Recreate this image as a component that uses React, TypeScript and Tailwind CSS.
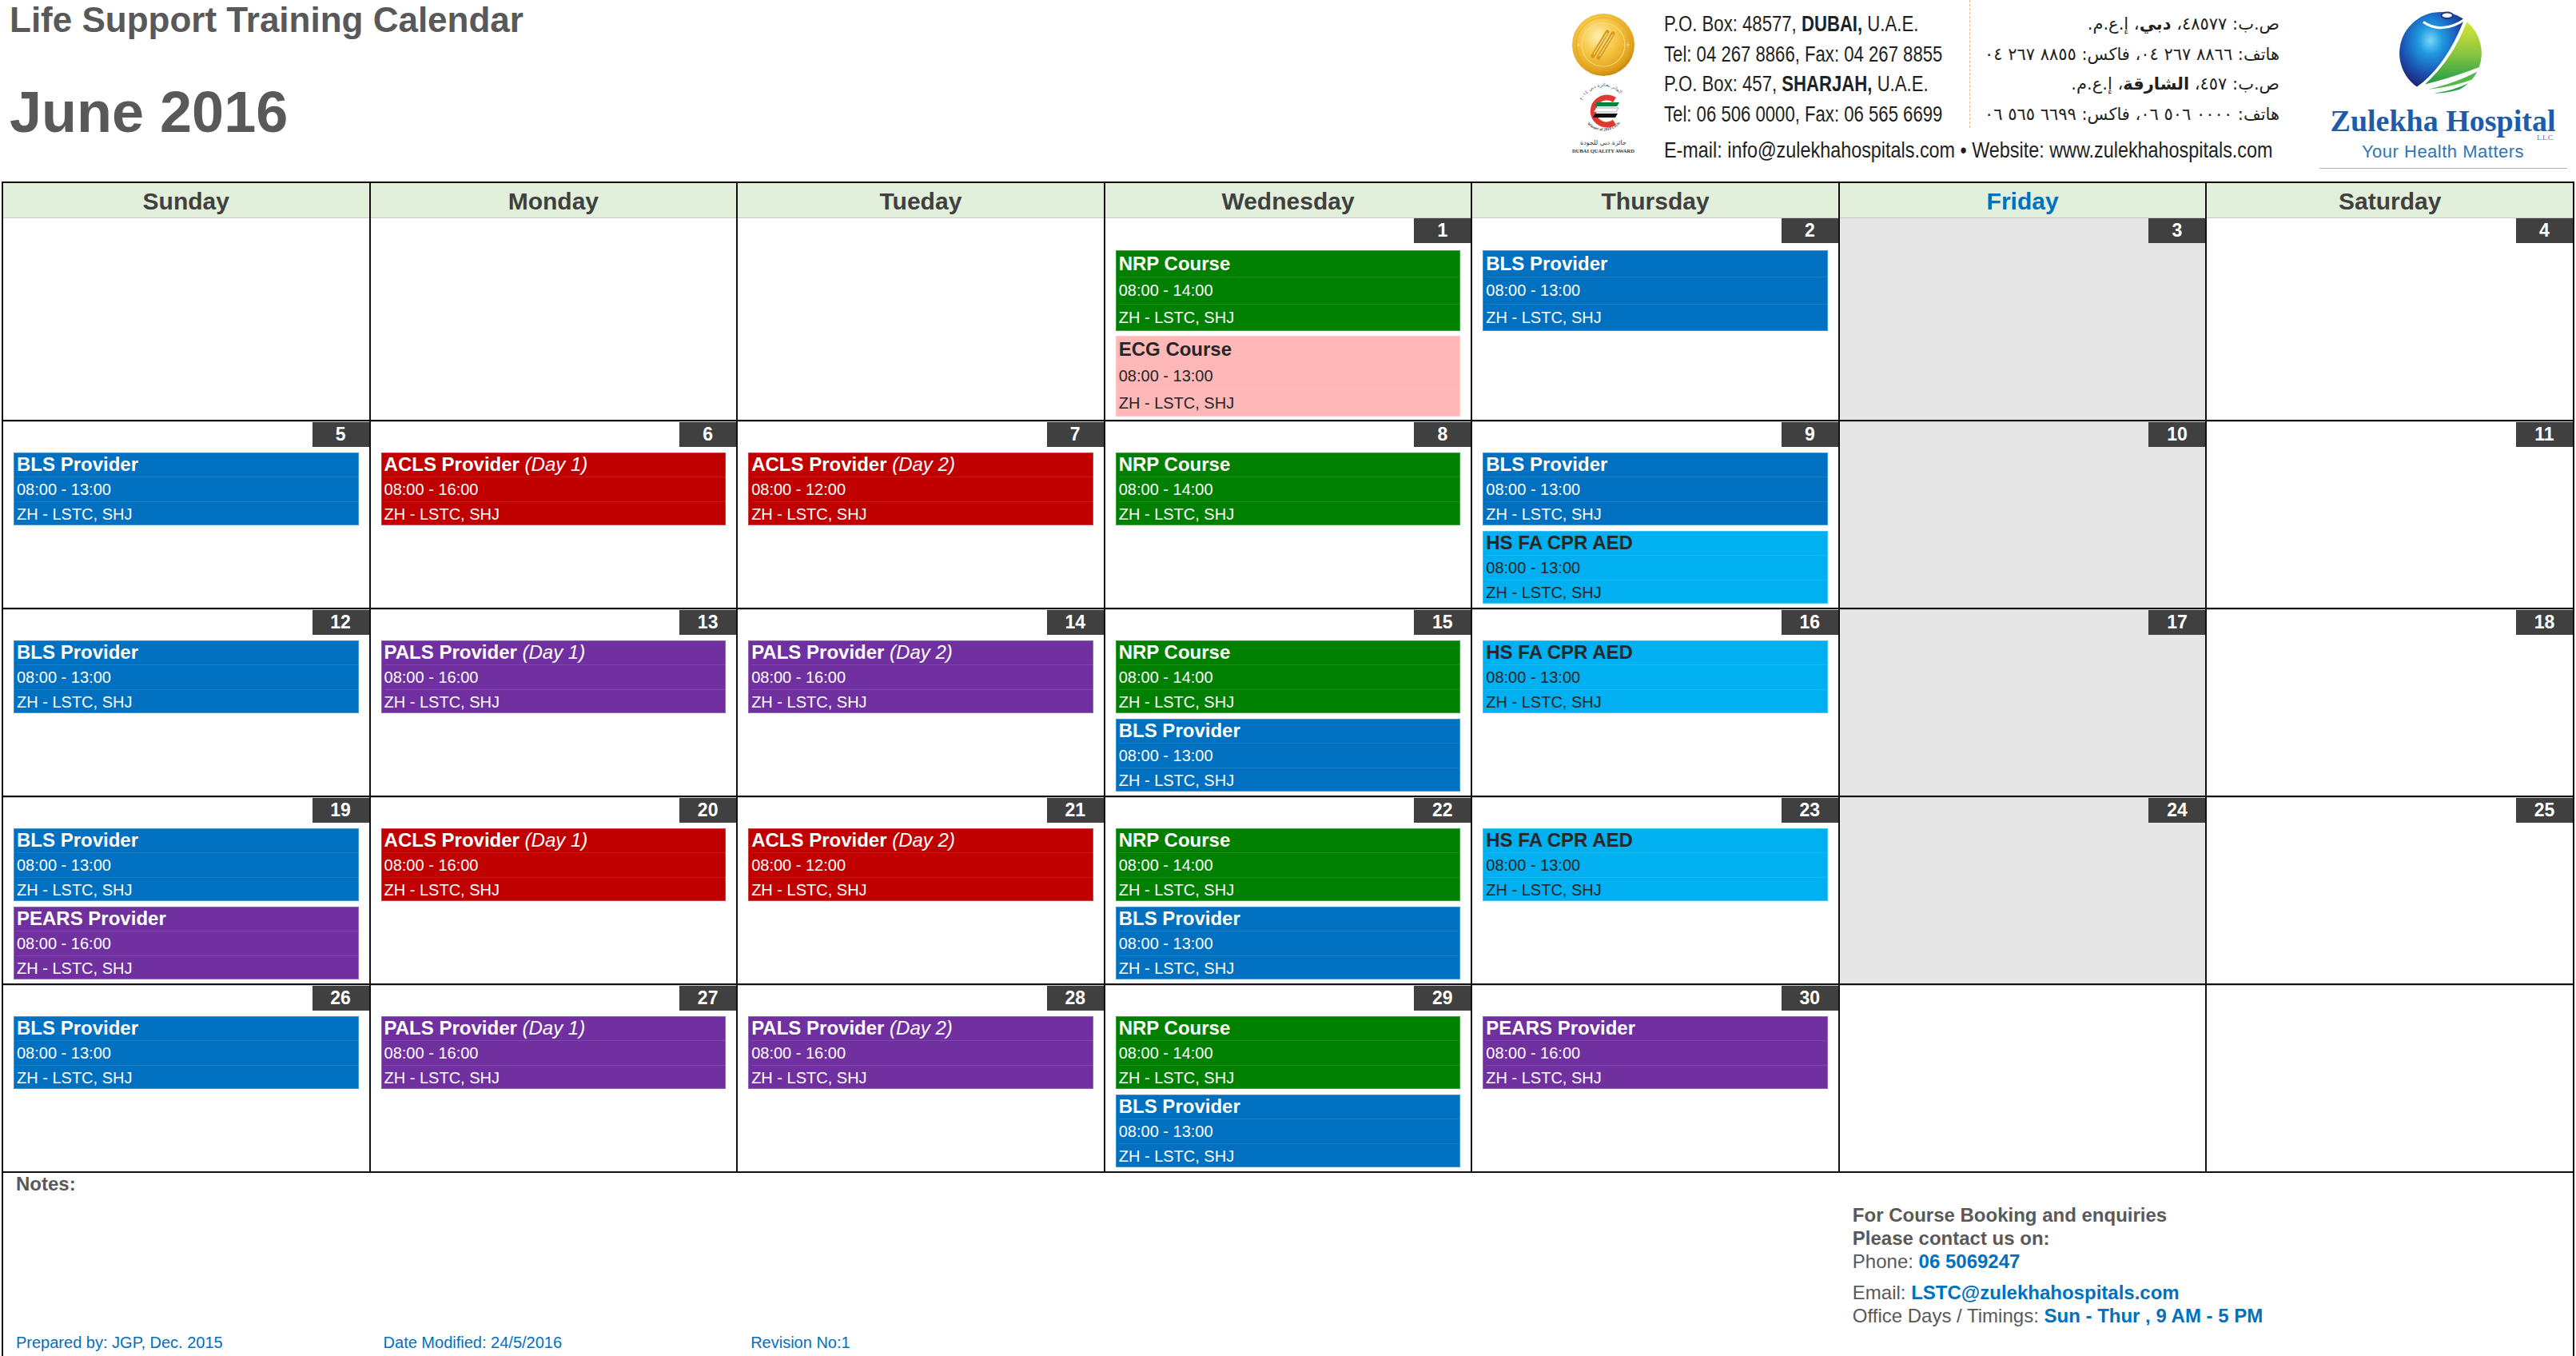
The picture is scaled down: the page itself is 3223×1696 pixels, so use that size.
import React from "react";

type Kind = "nrp" | "ecg" | "bls" | "acls" | "pals" | "pears" | "hs";
type Ev = { t: string; d?: string; time: string; k: Kind };
type Cell = { day?: number; ev: Ev[] };

const KCLS: Record<Kind, string> = {
  nrp: "bg-[#008000] text-white",
  ecg: "bg-[#ffb7b7] text-[#262626]",
  bls: "bg-[#0070c0] text-white",
  acls: "bg-[#c00000] text-white",
  pals: "bg-[#7030a0] text-white",
  pears: "bg-[#7030a0] text-white",
  hs: "bg-[#00b0f0] text-[#262626]",
};

const NRP: Ev = { t: "NRP Course", time: "08:00 - 14:00", k: "nrp" };
const ECG: Ev = { t: "ECG Course", time: "08:00 - 13:00", k: "ecg" };
const BLS: Ev = { t: "BLS Provider", time: "08:00 - 13:00", k: "bls" };
const ACLS1: Ev = { t: "ACLS Provider", d: "(Day 1)", time: "08:00 - 16:00", k: "acls" };
const ACLS2: Ev = { t: "ACLS Provider", d: "(Day 2)", time: "08:00 - 12:00", k: "acls" };
const PALS1: Ev = { t: "PALS Provider", d: "(Day 1)", time: "08:00 - 16:00", k: "pals" };
const PALS2: Ev = { t: "PALS Provider", d: "(Day 2)", time: "08:00 - 16:00", k: "pals" };
const PEARS: Ev = { t: "PEARS Provider", time: "08:00 - 16:00", k: "pears" };
const HS: Ev = { t: "HS FA CPR AED", time: "08:00 - 13:00", k: "hs" };

const WEEKS: Cell[][] = [
  [{ ev: [] }, { ev: [] }, { ev: [] }, { day: 1, ev: [NRP, ECG] }, { day: 2, ev: [BLS] }, { day: 3, ev: [] }, { day: 4, ev: [] }],
  [{ day: 5, ev: [BLS] }, { day: 6, ev: [ACLS1] }, { day: 7, ev: [ACLS2] }, { day: 8, ev: [NRP] }, { day: 9, ev: [BLS, HS] }, { day: 10, ev: [] }, { day: 11, ev: [] }],
  [{ day: 12, ev: [BLS] }, { day: 13, ev: [PALS1] }, { day: 14, ev: [PALS2] }, { day: 15, ev: [NRP, BLS] }, { day: 16, ev: [HS] }, { day: 17, ev: [] }, { day: 18, ev: [] }],
  [{ day: 19, ev: [BLS, PEARS] }, { day: 20, ev: [ACLS1] }, { day: 21, ev: [ACLS2] }, { day: 22, ev: [NRP, BLS] }, { day: 23, ev: [HS] }, { day: 24, ev: [] }, { day: 25, ev: [] }],
  [{ day: 26, ev: [BLS] }, { day: 27, ev: [PALS1] }, { day: 28, ev: [PALS2] }, { day: 29, ev: [NRP, BLS] }, { day: 30, ev: [PEARS] }, { ev: [] }, { ev: [] }],
];

const DAYS = ["Sunday", "Monday", "Tueday", "Wednesday", "Thursday", "Friday", "Saturday"];

function EventBox({ ev, big }: { ev: Ev; big: boolean }) {
  const lh = big ? "leading-[33px]" : "leading-[30px]";
  return (
    <div className={`${KCLS[ev.k]} ${big ? "h-[101px]" : "h-[91px]"} pl-[4px] ring-1 ring-inset ring-white/25 whitespace-nowrap overflow-hidden`}>
      <div className={`${lh} text-[24px] font-bold border-b border-white/10`}>
        {ev.t}
        {ev.d && <span className="font-normal italic"> {ev.d}</span>}
      </div>
      <div className={`${lh} text-[20px] border-b border-white/10`}>{ev.time}</div>
      <div className={`${lh} text-[20px]`}>ZH - LSTC, SHJ</div>
    </div>
  );
}

function DayCell({ cell, col, big }: { cell: Cell; col: number; big: boolean }) {
  const gray = col === 5 && cell.day !== undefined;
  return (
    <div className={`flex flex-col border-t border-[#c8c8c8] ${gray ? "bg-[#e7e6e6]" : "bg-white"}`}>
      <div className="flex h-[31px] justify-end">
        {cell.day !== undefined && (
          <div className="flex w-[71px] items-center justify-center bg-[#404040] text-[23px] font-bold leading-none text-white">
            {cell.day}
          </div>
        )}
      </div>
      <div className={`${big ? "mt-[9px] gap-[6px]" : "mt-[7px] gap-[7px]"} flex flex-col px-[13px]`}>
        {cell.ev.map((e, i) => (
          <EventBox key={i} ev={e} big={big} />
        ))}
      </div>
    </div>
  );
}

function Seal() {
  return (
    <svg width="80" height="80" viewBox="0 0 80 80">
      <defs>
        <radialGradient id="gold" cx="42%" cy="36%" r="66%">
          <stop offset="0" stopColor="#fff0b0" />
          <stop offset="0.45" stopColor="#f6c646" />
          <stop offset="0.85" stopColor="#e2a21d" />
          <stop offset="1" stopColor="#c58512" />
        </radialGradient>
      </defs>
      <circle cx="40" cy="40" r="39" fill="url(#gold)" />
      <circle cx="40" cy="40" r="27" fill="none" stroke="#fbe08a" strokeWidth="1.2" opacity="0.8" />
      <circle cx="40" cy="40" r="34" fill="none" stroke="#d99a1a" strokeWidth="0.8" opacity="0.6" />
      <path d="M27 54 L45 24 M34 56 L52 26" stroke="#d9981a" strokeWidth="5" strokeLinecap="round" />
      <path d="M28 52 L45 25 M35 54 L52 27" stroke="#fde7a0" strokeWidth="1.2" />
      <circle cx="9" cy="40" r="1.5" fill="#fbe08a" />
      <circle cx="71" cy="40" r="1.5" fill="#fbe08a" />
    </svg>
  );
}

function Award() {
  return (
    <div className="flex flex-col items-center">
      <svg width="84" height="74" viewBox="0 0 84 74">
        <defs>
          <path id="arcTop" d="M14 36 A 28 28 0 0 1 70 36" />
          <path id="arcBot" d="M16 46 A 28 28 0 0 0 68 46" />
        </defs>
        <text fontSize="6" fill="#555" fontFamily="DejaVu Sans">
          <textPath href="#arcTop" startOffset="12%">الفائز بجائزة دبي ٢٠١٤</textPath>
        </text>
        <path d="M56 25 A 17 17 0 1 0 56 53" fill="none" stroke="#e0392f" strokeWidth="7" />
        <path d="M34 28 L62 28 L59 33 L31 33 Z" fill="#00843d" />
        <path d="M33 35 L61 35 L58 40 L30 40 Z" fill="#ffffff" stroke="#888" strokeWidth="0.7" />
        <path d="M32 42 L60 42 L57 47 L29 47 Z" fill="#111" />
        <text fontSize="5" fill="#444" fontFamily="Liberation Serif" fontWeight="bold">
          <textPath href="#arcBot" startOffset="16%">Winner of 2014 Cycle</textPath>
        </text>
      </svg>
      <div className="font-['DejaVu_Sans',sans-serif] text-[8px] leading-[10px] text-[#333]" dir="rtl">جائزة دبي للجودة</div>
      <div className="font-['Liberation_Serif',serif] text-[6.5px] font-bold leading-[9px] text-[#333]">DUBAI QUALITY AWARD</div>
    </div>
  );
}

function Globe() {
  return (
    <svg width="113" height="113" viewBox="0 0 110 110">
      <defs>
        <radialGradient id="blueG" cx="48%" cy="38%" r="62%">
          <stop offset="0" stopColor="#7ad6f8" />
          <stop offset="0.3" stopColor="#1f9ae0" />
          <stop offset="0.7" stopColor="#1b55b5" />
          <stop offset="1" stopColor="#1d2a7c" />
        </radialGradient>
        <linearGradient id="greenG" x1="0" y1="0" x2="0" y2="1">
          <stop offset="0" stopColor="#d8e638" />
          <stop offset="0.5" stopColor="#8cc63f" />
          <stop offset="1" stopColor="#1f9a4a" />
        </linearGradient>
      </defs>
      <path d="M83.7 14 A 50 50 0 1 0 26.3 96 Q 62 70 83.7 14 Z" fill="url(#blueG)" />
      <path d="M87.1 16.7 A 50 50 0 0 1 102 72.1 Q 72 84 36 93 Q 70 62 87.1 16.7 Z" fill="url(#greenG)" />
      <path d="M99.5 77.7 A 50 50 0 0 1 93.3 87.1 Q 70 96 40 99 Q 72 92 99.5 77.7 Z" fill="#52b848" />
      <path d="M89.1 91.6 A 50 50 0 0 1 78.5 99.1 Q 62 104 46 104 Q 70 101 89.1 91.6 Z" fill="#2aa24a" />
      <path d="M34 17 Q 58 33 86 13" stroke="#ffffff" strokeWidth="3" fill="none" />
      <ellipse cx="63" cy="9" rx="7" ry="3.6" fill="#ffffff" stroke="#1b3a8a" strokeWidth="2" />
    </svg>
  );
}

export default function App() {
  return (
    <div className="h-[1696px] w-[3223px] overflow-hidden bg-white font-['Liberation_Sans',Arial,sans-serif]">
      {/* Header */}
      <div className="flex h-[227px]">
        <div className="w-[1963px] pl-[12px]">
          <div className="mt-[3px] text-[44px] font-bold leading-[44px] text-[#595959]">Life Support Training Calendar</div>
          <div className="mt-[57px] text-[72px] font-bold leading-[72px] text-[#595959]">June 2016</div>
        </div>
        <div className="flex w-[86px] flex-col items-center pt-[16px]">
          <Seal />
          <div className="mt-[4px]">
            <Award />
          </div>
        </div>
        <div className="ml-[33px] flex w-[770px] flex-col text-[#231f20]">
          <div className="flex h-[165px]">
            <div className="w-[382px] pt-[12px]">
              <div className="w-max origin-left scale-x-[0.82] text-[27px] leading-[37.5px] whitespace-nowrap">
                <div>
                  P.O. Box: 48577, <b>DUBAI,</b> U.A.E.
                </div>
                <div>Tel: 04 267 8866, Fax: 04 267 8855</div>
                <div>
                  P.O. Box: 457, <b>SHARJAH,</b> U.A.E.
                </div>
                <div>Tel: 06 506 0000, Fax: 06 565 6699</div>
              </div>
            </div>
            <div className="h-[160px] w-0 border-l border-dashed border-[#f4b183]" />
            <div className="flex-1 pt-[12px] text-right font-['DejaVu_Sans',sans-serif] text-[21px] leading-[37.5px] whitespace-nowrap" dir="rtl">
              <div>
                ص.ب: ٤٨٥٧٧، <b>دبي</b>، إ.ع.م.
              </div>
              <div>هاتف: ٨٨٦٦ ٢٦٧ ٠٤، فاكس: ٨٨٥٥ ٢٦٧ ٠٤</div>
              <div>
                ص.ب: ٤٥٧، <b>الشارقة</b>، إ.ع.م.
              </div>
              <div>هاتف: ٠٠٠٠ ٥٠٦ ٠٦، فاكس: ٦٦٩٩ ٥٦٥ ٠٦</div>
            </div>
          </div>
          <div className="mt-[3px]">
            <div className="w-max origin-left scale-x-[0.82] text-[28.5px] leading-[38px] whitespace-nowrap">
              E-mail: info@zulekhahospitals.com • Website: www.zulekhahospitals.com
            </div>
          </div>
        </div>
        <div className="ml-[45px] flex w-[319px] flex-col items-center">
          <div className="mt-[10px] -ml-[6px]">
            <Globe />
          </div>
          <div className="relative mt-[8px] font-['Liberation_Serif',serif] text-[38px] font-bold leading-[40px] text-[#1d5ca8] whitespace-nowrap">
            Zulekha Hospital
            <span className="absolute right-[2px] top-[38px] text-[8px] font-normal leading-none">L.L.C.</span>
          </div>
          <div className="mt-[7px] text-[22px] leading-[24px] tracking-[0.5px] text-[#2e75b6] whitespace-nowrap">Your Health Matters</div>
          <div className="mt-[8px] h-px w-[310px] bg-[#b0b0b0]" />
        </div>
      </div>

      {/* Calendar */}
      <div className="mx-[2px] flex flex-col gap-[2px] bg-[#111] px-[2px] pt-[2px]">
        <div className="grid h-[41px] grid-cols-7 gap-x-[2px]">
          {DAYS.map((d, i) => (
            <div
              key={d}
              className={`flex items-center justify-center bg-[#e2efda] text-[30px] font-bold ${i === 5 ? "text-[#0070c0]" : "text-[#404040]"}`}
            >
              {d}
            </div>
          ))}
        </div>
        {WEEKS.map((w, wi) => (
          <div key={wi} className={`grid grid-cols-7 gap-x-[2px] ${wi === 0 ? "h-[253px]" : "h-[233px]"}`}>
            {w.map((c, ci) => (
              <DayCell key={ci} cell={c} col={ci} big={wi === 0} />
            ))}
          </div>
        ))}
        <div className="grid h-[231px] grid-cols-7 gap-x-[2px] bg-white">
          <div className="flex flex-col justify-between pb-[7px] pl-[16px]">
            <div className="text-[24px] font-bold leading-[28px] text-[#595959]">Notes:</div>
            <div className="text-[20px] leading-[24px] text-[#0070c0]">Prepared by: JGP, Dec. 2015</div>
          </div>
          <div className="flex flex-col justify-end pb-[7px] pl-[16px]">
            <div className="text-[20px] leading-[24px] text-[#0070c0]">Date Modified: 24/5/2016</div>
          </div>
          <div className="flex flex-col justify-end pb-[7px] pl-[16px]">
            <div className="text-[20px] leading-[24px] text-[#0070c0]">Revision No:1</div>
          </div>
          <div />
          <div />
          <div className="col-span-2 pl-[16px] pt-[38px] text-[24px] text-[#595959] whitespace-nowrap">
            <div className="font-bold leading-[29px]">For Course Booking and enquiries</div>
            <div className="font-bold leading-[29px]">Please contact us on:</div>
            <div className="leading-[30px]">
              Phone: <span className="font-bold text-[#0070c0]">06 5069247</span>
            </div>
            <div className="mt-[9px] leading-[29px]">
              Email: <span className="font-bold text-[#0070c0]">LSTC@zulekhahospitals.com</span>
            </div>
            <div className="leading-[29px]">
              Office Days / Timings: <span className="font-bold text-[#0070c0]">Sun - Thur , 9 AM - 5 PM</span>
            </div>
          </div>
        </div>
      </div>
    </div>
  );
}
